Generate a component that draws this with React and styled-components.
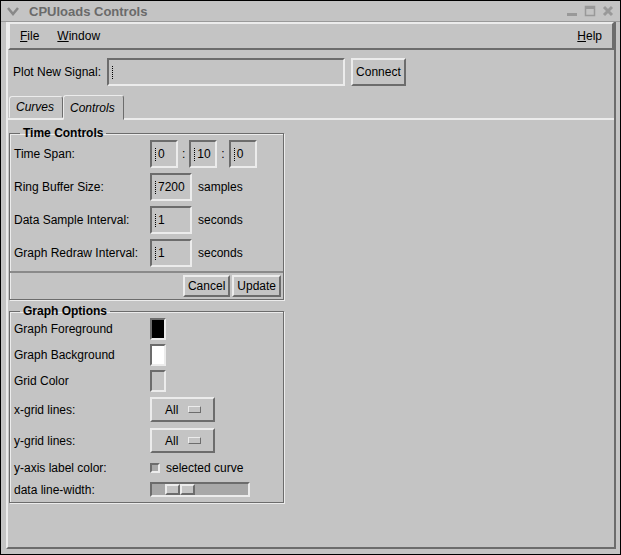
import React from 'react';
import styled, { createGlobalStyle, css } from 'styled-components';

const Global = createGlobalStyle`
  html, body { margin: 0; padding: 0; background: #c4c4c4; }
  body { font-family: "Liberation Sans", Arial, sans-serif; font-size: 12px; color: #000; }
`;

const raised = css`
  border: 2px solid;
  border-color: #ececec #6c6c6c #6c6c6c #ececec;
`;
const sunken = css`
  border: 2px solid;
  border-color: #6c6c6c #ececec #ececec #6c6c6c;
`;

const Frame = styled.div`
  width: 621px;
  height: 555px;
  box-sizing: border-box;
  background: #c4c4c4;
  border: 1px solid #000;
  display: flex;
  flex-direction: column;
`;

const TitleBar = styled.div`
  height: 20px;
  display: flex;
  align-items: center;
  background: #c4c4c4;
  border-bottom: 1px solid #9a9a9a;
  color: #6a6a6a;
  font-weight: bold;
  font-size: 13px;
  padding: 0 6px;
  gap: 10px;
`;

const TitleText = styled.span`
  flex: 1;
`;

const WinButtons = styled.div`
  display: flex;
  gap: 6px;
  color: #888;
`;

const Body = styled.div`
  flex: 1;
  margin: 0 4px 5px 5px;
  border-left: 2px solid #ececec;
  border-right: 2px solid #6c6c6c;
  border-bottom: 2px solid #6c6c6c;
  display: flex;
  flex-direction: column;
`;

const MenuBar = styled.div`
  ${raised};
  height: 24px;
  display: flex;
  align-items: center;
  padding: 0 10px;
  gap: 18px;
`;

const MenuItem = styled.span`
  font-size: 12px;
  margin-left: ${p => (p.$right ? 'auto' : '0')};
  & u { text-decoration: underline; }
`;

const SignalRow = styled.div`
  display: flex;
  align-items: center;
  padding: 8px 5px 7px 5px;
  gap: 6px;
`;

const TextField = styled.div`
  ${sunken};
  box-sizing: border-box;
  width: ${p => p.$w || 38}px;
  height: ${p => p.$h || 28}px;
  display: flex;
  align-items: center;
  padding-left: 3px;
  font-size: 12px;
`;

const Cursor = styled.span`
  display: inline-block;
  width: 1px;
  height: 13px;
  border-left: 1px dotted #000;
  margin-right: 1px;
`;

const Button = styled.div`
  ${raised};
  box-sizing: border-box;
  height: ${p => p.$h || 28}px;
  padding: 0 3px;
  display: flex;
  align-items: center;
  font-size: 12px;
`;

const Tabs = styled.div`
  display: flex;
  align-items: flex-end;
  height: 24px;
  margin-top: 1px;
  border-bottom: 2px solid #ececec;
  padding-left: 1px;
`;

const Tab = styled.div`
  border: 1px solid;
  border-color: #ececec #6c6c6c transparent #ececec;
  border-radius: 3px 3px 0 0;
  font-style: italic;
  padding: 0 8px 0 6px;
  height: ${p => (p.$active ? 23 : 20)}px;
  display: flex;
  align-items: center;
  margin-bottom: ${p => (p.$active ? -2 : 0)}px;
  background: #c4c4c4;
`;

const Content = styled.div`
  padding: 6px 1px;
  display: flex;
  flex-direction: column;
  gap: 4px;
`;

const Group = styled.fieldset`
  width: 275px;
  box-sizing: border-box;
  margin: 0;
  padding: 0;
  border: 1px solid #6c6c6c;
  box-shadow: inset 1px 1px 0 #ececec, 1px 1px 0 #ececec;
`;

const Legend = styled.legend`
  font-weight: bold;
  font-size: 12px;
  padding: 0 3px;
  margin-left: 10px;
`;

const Rows = styled.div`
  display: grid;
  grid-template-columns: 136px 1fr;
  row-gap: ${p => p.$gap || 5}px;
  padding: 0 4px 4px 4px;
  align-items: center;
`;

const Cell = styled.div`
  display: flex;
  align-items: center;
  gap: ${p => p.$gap || 6}px;
  min-height: ${p => p.$h || 0}px;
`;

const ButtonBar = styled.div`
  border-top: 2px solid #8a8a8a;
  display: flex;
  justify-content: flex-end;
  gap: 2px;
  padding: 2px;
`;

const Swatch = styled.div`
  ${sunken};
  box-sizing: border-box;
  width: 16px;
  height: 22px;
  background: ${p => p.$c};
`;

const Option = styled.div`
  ${raised};
  box-sizing: border-box;
  width: 65px;
  height: 25px;
  display: flex;
  align-items: center;
  justify-content: space-between;
  padding: 0 12px 0 13px;
`;

const OptionMark = styled.span`
  width: 11px;
  height: 5px;
  border: 1px solid;
  border-color: #ececec #6c6c6c #6c6c6c #ececec;
`;

const Check = styled.span`
  ${sunken};
  width: 6px;
  height: 6px;
  background: #a8a8a8;
`;

const Slider = styled.div`
  ${sunken};
  box-sizing: border-box;
  width: 100px;
  height: 15px;
  background: #a8a8a8;
  display: flex;
  align-items: stretch;
  padding-left: 13px;
`;

const Thumb = styled.div`
  ${raised};
  box-sizing: border-box;
  width: 15px;
  height: 100%;
  background: #c4c4c4;
`;

export default function App() {
  return (
    <>
      <Global />
      <Frame>
        <TitleBar>
          <svg width="12" height="10" viewBox="0 0 12 10">
            <path d="M1 2 L6 8 L11 2" stroke="#888" strokeWidth="2.5" fill="none" />
          </svg>
          <TitleText>CPUloads Controls</TitleText>
          <WinButtons>
            <svg width="12" height="12" viewBox="0 0 12 12"><rect x="1" y="8" width="10" height="3" fill="#999" /></svg>
            <svg width="12" height="12" viewBox="0 0 12 12"><rect x="1.5" y="1.5" width="9" height="9" stroke="#999" strokeWidth="1.5" fill="none" /><rect x="1" y="1" width="10" height="3" fill="#999" /></svg>
            <svg width="12" height="12" viewBox="0 0 12 12"><path d="M2 2 L10 10 M10 2 L2 10" stroke="#999" strokeWidth="3" /></svg>
          </WinButtons>
        </TitleBar>
        <Body>
          <MenuBar>
            <MenuItem><u>F</u>ile</MenuItem>
            <MenuItem><u>W</u>indow</MenuItem>
            <MenuItem $right><u>H</u>elp</MenuItem>
          </MenuBar>
          <SignalRow>
            <span>Plot New Signal:</span>
            <TextField $w={238} $h={28}><Cursor /></TextField>
            <Button>Connect</Button>
          </SignalRow>
          <Tabs>
            <Tab>Curves</Tab>
            <Tab $active>Controls</Tab>
          </Tabs>
          <Content>
            <Group>
              <Legend>Time Controls</Legend>
              <Rows $gap={5}>
                <span>Time Span:</span>
                <Cell $gap={4}>
                  <TextField $w={28}><Cursor />0</TextField>:
                  <TextField $w={28}><Cursor />10</TextField>:
                  <TextField $w={28}><Cursor />0</TextField>
                </Cell>
                <span>Ring Buffer Size:</span>
                <Cell><TextField $w={42}><Cursor />7200</TextField>samples</Cell>
                <span>Data Sample Interval:</span>
                <Cell><TextField $w={42}><Cursor />1</TextField>seconds</Cell>
                <span>Graph Redraw Interval:</span>
                <Cell><TextField $w={42}><Cursor />1</TextField>seconds</Cell>
              </Rows>
              <ButtonBar>
                <Button $h={22}>Cancel</Button>
                <Button $h={22}>Update</Button>
              </ButtonBar>
            </Group>
            <Group>
              <Legend>Graph Options</Legend>
              <Rows $gap={4}>
                <span>Graph Foreground</span>
                <Cell $h={22}><Swatch $c="#000" /></Cell>
                <span>Graph Background</span>
                <Cell $h={22}><Swatch $c="#fff" /></Cell>
                <span>Grid Color</span>
                <Cell $h={22}><Swatch $c="#c4c4c4" /></Cell>
                <span>x-grid lines:</span>
                <Cell $h={27}><Option>All<OptionMark /></Option></Cell>
                <span>y-grid lines:</span>
                <Cell $h={27}><Option>All<OptionMark /></Option></Cell>
                <span>y-axis label color:</span>
                <Cell $h={19}><Check />selected curve</Cell>
                <span>data line-width:</span>
                <Cell $h={17}><Slider><Thumb /><Thumb /></Slider></Cell>
              </Rows>
            </Group>
          </Content>
        </Body>
      </Frame>
    </>
  );
}
